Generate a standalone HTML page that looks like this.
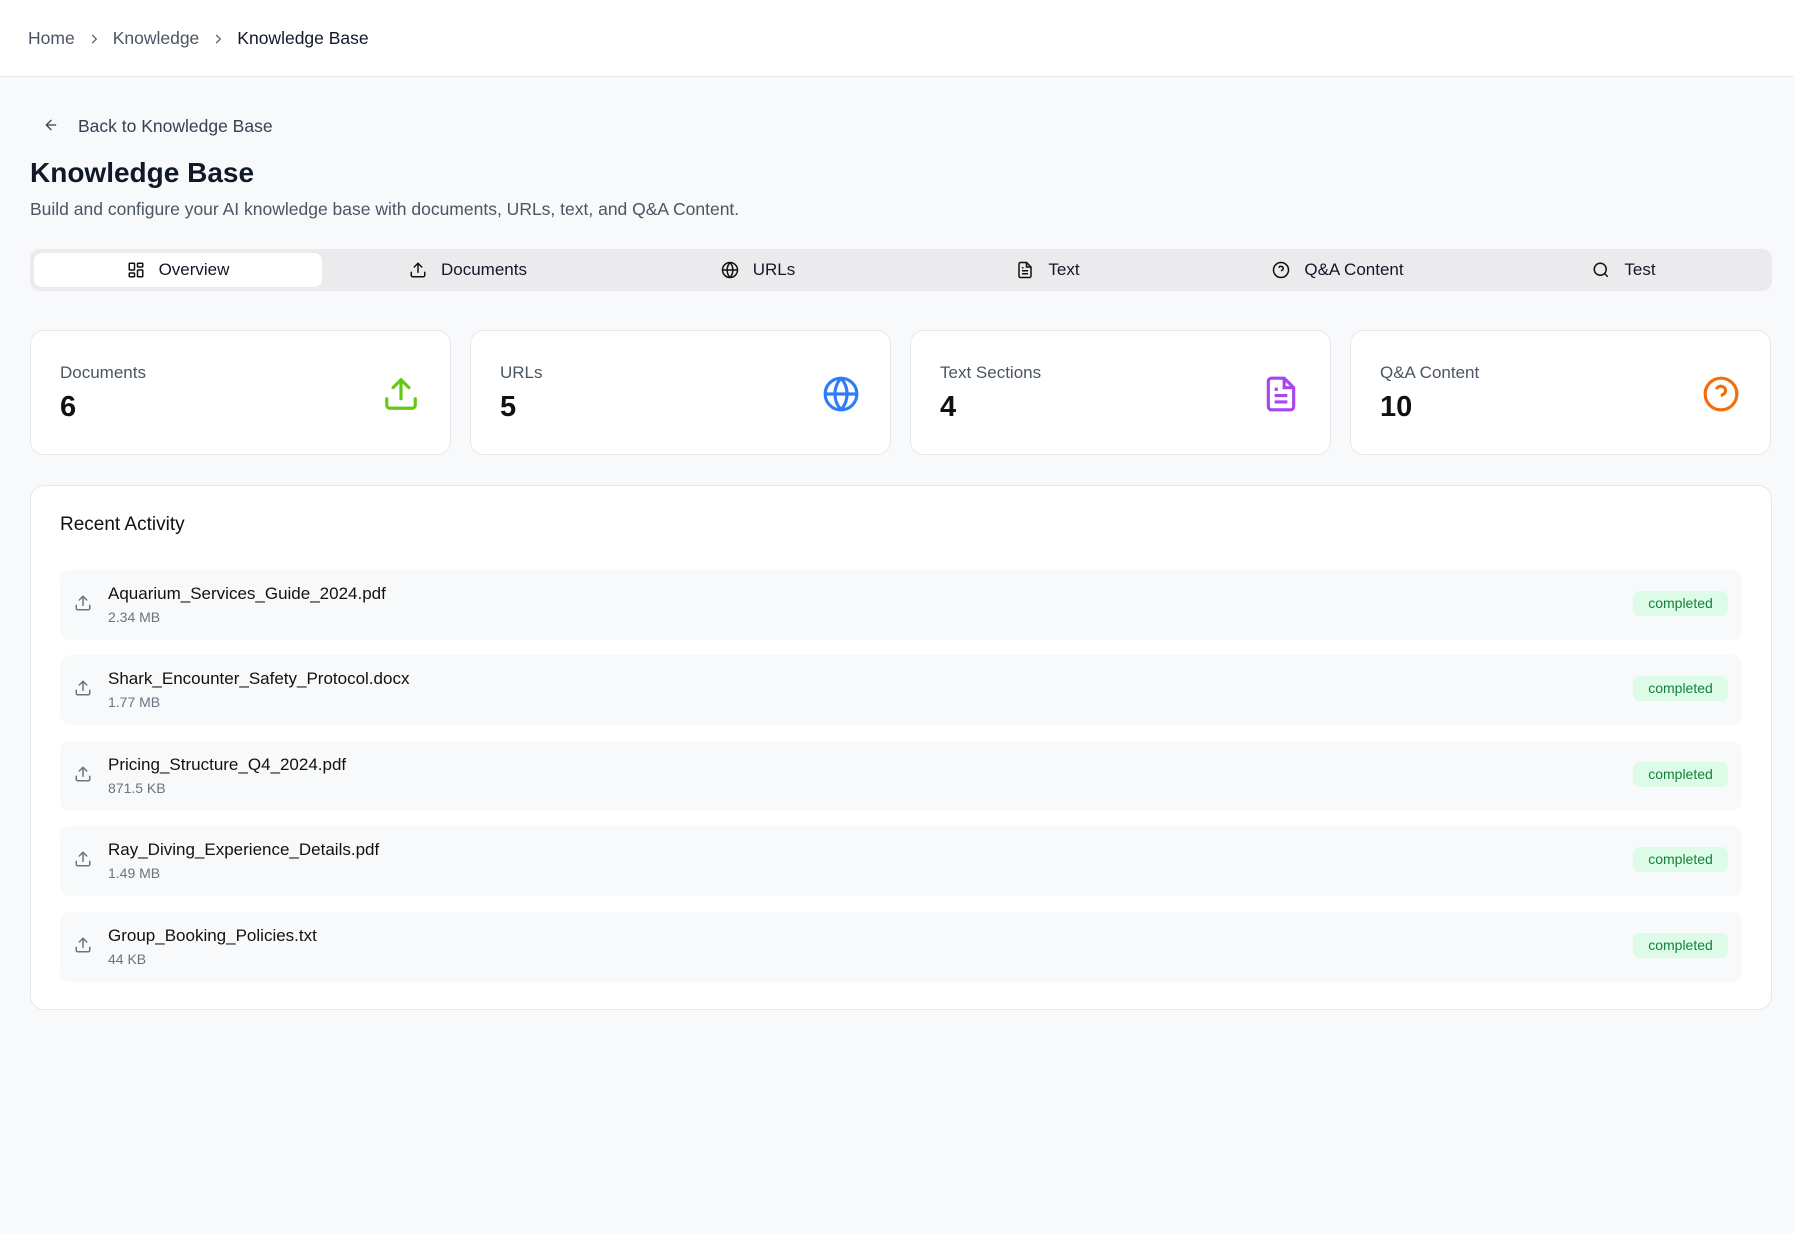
<!DOCTYPE html>
<html><head><meta charset="utf-8"><style>
*{box-sizing:border-box;margin:0;padding:0}
body{width:1794px;height:1234px;background:#f8f9fa;font-family:"Liberation Sans",sans-serif;color:#111827;position:relative;overflow:hidden}
.hdr{position:absolute;left:0;top:0;width:1794px;height:77px;background:#fff;border-bottom:1px solid #e5e7eb}
.bc{position:absolute;left:28px;top:28px;font-size:17.5px;color:#4b5563;display:flex;align-items:center;gap:12px}
.bc b{font-weight:normal;color:#111827}
.abs{position:absolute}
.tabs{position:absolute;left:30px;top:249px;width:1742px;height:42px;background:#ebebee;border-radius:10px}
.tab{position:absolute;top:4px;height:34px;width:288px;display:flex;align-items:center;justify-content:center;gap:14px;font-size:17px;color:#111827}
.tab.act{background:#fff;border-radius:8px}
.card{position:absolute;top:330px;width:421px;height:125px;background:#fff;border:1px solid #e5e7eb;border-radius:14px}
.card .l{position:absolute;left:29px;top:32px;font-size:17px;color:#4b5563}
.card .n{position:absolute;left:29px;top:60px;font-size:29px;font-weight:bold;color:#111}
.card svg{position:absolute;right:30px;top:44px}
.ra{position:absolute;left:30px;top:485px;width:1742px;height:525px;background:#fff;border:1px solid #e5e7eb;border-radius:14px}
.row{position:absolute;left:29px;width:1682px;height:70px;background:#f8f9fa;border-radius:10px}
.row svg{position:absolute;left:14px;top:24px}
.row .f{position:absolute;left:48px;top:14px;font-size:17px;color:#111}
.row .s{position:absolute;left:48px;top:39px;font-size:14px;color:#6b7280}
.bd{position:absolute;right:14px;top:21px;width:95px;height:25px;background:#dcfce7;color:#15803d;border-radius:7px;font-size:14px;text-align:center;line-height:25px}
</style></head><body>
<div class="hdr"><div class="bc"><span>Home</span><svg width="14" height="14" viewBox="0 0 24 24" fill="none" stroke="#4b5563" stroke-width="2"><path d="M9 5l7 7-7 7"/></svg><span>Knowledge</span><svg width="14" height="14" viewBox="0 0 24 24" fill="none" stroke="#4b5563" stroke-width="2"><path d="M9 5l7 7-7 7"/></svg><b>Knowledge Base</b></div></div>
<svg class="abs" style="left:43px;top:117px" width="16" height="16" viewBox="0 0 24 24" fill="none" stroke="#374151" stroke-width="2" stroke-linecap="round"><path d="M19 12H5M12 19l-7-7 7-7"/></svg>
<div class="abs" style="left:78px;top:116px;font-size:17.5px;color:#374151">Back to Knowledge Base</div>
<div class="abs" style="left:30px;top:157px;font-size:28px;font-weight:bold;color:#111827">Knowledge Base</div>
<div class="abs" style="left:30px;top:199px;font-size:17.5px;color:#4b5563">Build and configure your AI knowledge base with documents, URLs, text, and Q&amp;A Content.</div>
<div class="tabs">
<div class="tab act" style="left:4px"><svg width="18" height="18" viewBox="0 0 24 24" fill="none" stroke="#111" stroke-width="2"><rect x="3" y="3" width="7" height="9" rx="1"/><rect x="14" y="3" width="7" height="5" rx="1"/><rect x="14" y="12" width="7" height="9" rx="1"/><rect x="3" y="16" width="7" height="5" rx="1"/></svg>Overview</div>
<div class="tab" style="left:294px"><svg width="18" height="18" viewBox="0 0 24 24" fill="none" stroke="#111" stroke-width="2" stroke-linecap="round"><path d="M21 15v4a2 2 0 0 1-2 2H5a2 2 0 0 1-2-2v-4M17 8l-5-5-5 5M12 3v12"/></svg>Documents</div>
<div class="tab" style="left:584px"><svg width="18" height="18" viewBox="0 0 24 24" fill="none" stroke="#111" stroke-width="2"><circle cx="12" cy="12" r="10"/><path d="M2 12h20M12 2a15 15 0 0 1 0 20M12 2a15 15 0 0 0 0 20"/></svg>URLs</div>
<div class="tab" style="left:874px"><svg width="18" height="18" viewBox="0 0 24 24" fill="none" stroke="#111" stroke-width="2"><path d="M14 2H6a2 2 0 0 0-2 2v16a2 2 0 0 0 2 2h12a2 2 0 0 0 2-2V8z"/><path d="M14 2v6h6M16 13H8M16 17H8M10 9H8"/></svg>Text</div>
<div class="tab" style="left:1164px"><svg width="18" height="18" viewBox="0 0 24 24" fill="none" stroke="#111" stroke-width="2"><circle cx="12" cy="12" r="10"/><path d="M9.1 9a3 3 0 0 1 5.8 1c0 2-3 3-3 3M12 17h.01"/></svg>Q&amp;A Content</div>
<div class="tab" style="left:1450px"><svg width="18" height="18" viewBox="0 0 24 24" fill="none" stroke="#111" stroke-width="2"><circle cx="11" cy="11" r="8"/><path d="M21 21l-4.3-4.3"/></svg>Test</div>
</div>
<div class="card" style="left:30px"><div class="l">Documents</div><div class="n">6</div><svg width="38" height="38" viewBox="0 0 24 24" fill="none" stroke="#65c913" stroke-width="2" stroke-linecap="round"><path d="M21 15v4a2 2 0 0 1-2 2H5a2 2 0 0 1-2-2v-4M17 8l-5-5-5 5M12 3v12"/></svg></div>
<div class="card" style="left:470px"><div class="l">URLs</div><div class="n">5</div><svg width="38" height="38" viewBox="0 0 24 24" fill="none" stroke="#2f7cf6" stroke-width="2"><circle cx="12" cy="12" r="10"/><path d="M2 12h20M12 2a15 15 0 0 1 0 20M12 2a15 15 0 0 0 0 20"/></svg></div>
<div class="card" style="left:910px"><div class="l">Text Sections</div><div class="n">4</div><svg width="38" height="38" viewBox="0 0 24 24" fill="none" stroke="#a845f0" stroke-width="2"><path d="M14 2H6a2 2 0 0 0-2 2v16a2 2 0 0 0 2 2h12a2 2 0 0 0 2-2V8z"/><path d="M14 2v6h6M16 13H8M16 17H8M10 9H8"/></svg></div>
<div class="card" style="left:1350px"><div class="l">Q&amp;A Content</div><div class="n">10</div><svg width="38" height="38" viewBox="0 0 24 24" fill="none" stroke="#f76b0a" stroke-width="2"><circle cx="12" cy="12" r="10"/><path d="M9.1 9a3 3 0 0 1 5.8 1c0 2-3 3-3 3M12 17h.01"/></svg></div>
<div class="ra">
<div class="abs" style="left:29px;top:28px;font-size:19px;color:#111">Recent Activity</div>
<div class="row" style="top:84px"><svg width="18" height="18" viewBox="0 0 24 24" fill="none" stroke="#6b7280" stroke-width="2" stroke-linecap="round"><path d="M21 15v4a2 2 0 0 1-2 2H5a2 2 0 0 1-2-2v-4M17 8l-5-5-5 5M12 3v12"/></svg><div class="f">Aquarium_Services_Guide_2024.pdf</div><div class="s">2.34 MB</div><div class="bd">completed</div></div>
<div class="row" style="top:169px"><svg width="18" height="18" viewBox="0 0 24 24" fill="none" stroke="#6b7280" stroke-width="2" stroke-linecap="round"><path d="M21 15v4a2 2 0 0 1-2 2H5a2 2 0 0 1-2-2v-4M17 8l-5-5-5 5M12 3v12"/></svg><div class="f">Shark_Encounter_Safety_Protocol.docx</div><div class="s">1.77 MB</div><div class="bd">completed</div></div>
<div class="row" style="top:255px"><svg width="18" height="18" viewBox="0 0 24 24" fill="none" stroke="#6b7280" stroke-width="2" stroke-linecap="round"><path d="M21 15v4a2 2 0 0 1-2 2H5a2 2 0 0 1-2-2v-4M17 8l-5-5-5 5M12 3v12"/></svg><div class="f">Pricing_Structure_Q4_2024.pdf</div><div class="s">871.5 KB</div><div class="bd">completed</div></div>
<div class="row" style="top:340px"><svg width="18" height="18" viewBox="0 0 24 24" fill="none" stroke="#6b7280" stroke-width="2" stroke-linecap="round"><path d="M21 15v4a2 2 0 0 1-2 2H5a2 2 0 0 1-2-2v-4M17 8l-5-5-5 5M12 3v12"/></svg><div class="f">Ray_Diving_Experience_Details.pdf</div><div class="s">1.49 MB</div><div class="bd">completed</div></div>
<div class="row" style="top:426px"><svg width="18" height="18" viewBox="0 0 24 24" fill="none" stroke="#6b7280" stroke-width="2" stroke-linecap="round"><path d="M21 15v4a2 2 0 0 1-2 2H5a2 2 0 0 1-2-2v-4M17 8l-5-5-5 5M12 3v12"/></svg><div class="f">Group_Booking_Policies.txt</div><div class="s">44 KB</div><div class="bd">completed</div></div>
</div>
</body></html>
